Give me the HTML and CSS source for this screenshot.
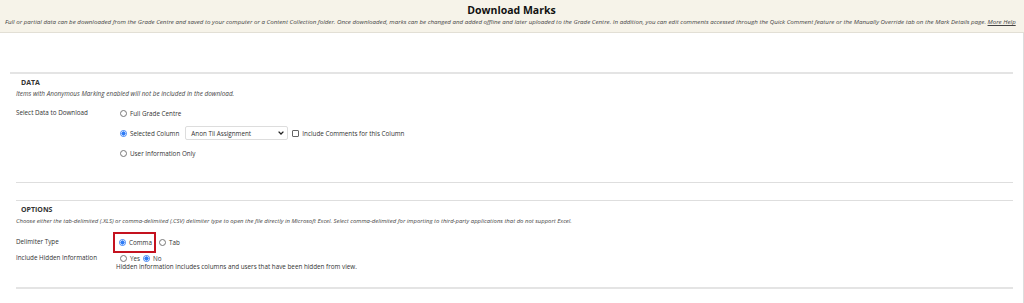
FILE: index.html
```html
<!DOCTYPE html>
<html lang="en">
<head>
  <meta charset="UTF-8">
  <meta name="viewport" content="width=device-width, initial-scale=1.0">
  <title>Download Marks</title>
  <link rel="stylesheet" href="styles.css">
</head>
<body>
  <div class="page-header">
    <h1>Download Marks</h1>
    <p class="page-help">Full or partial data can be downloaded from the Grade Centre and saved to your computer or a Content Collection folder. Once downloaded, marks can be changed and added offline and later uploaded to the Grade Centre. In addition, you can edit comments accessed through the Quick Comment feature or the Manually Override tab on the Mark Details page. <a href="#">More Help</a></p>
  </div>

  <div class="content">
    <div class="step step-first">
      <h3>DATA</h3>
      <p class="step-help">Items with Anonymous Marking enabled will not be included in the download.</p>

      <div class="field">
        <div class="field-label">Select Data to Download</div>
        <div class="field-body">
          <div class="opt-row">
            <span class="radio"></span><span>Full Grade Centre</span>
          </div>
          <div class="opt-row">
            <span class="radio checked"></span><span>Selected Column</span>
            <div class="select">
              <span>Anon Tii Assignment</span>
              <svg width="6" height="4" viewBox="0 0 6 4"><path d="M0.6 0.6 L3 3 L5.4 0.6" fill="none" stroke="#222" stroke-width="1.3"/></svg>
            </div>
            <span class="checkbox"></span><span>Include Comments for this Column</span>
          </div>
          <div class="opt-row">
            <span class="radio"></span><span>User Information Only</span>
          </div>
        </div>
      </div>
    </div>

    <div class="step-gap"></div>

    <div class="step step-second">
      <h3>OPTIONS</h3>
      <p class="step-help">Choose either the tab-delimited (.XLS) or comma-delimited (.CSV) delimiter type to open the file directly in Microsoft Excel. Select comma-delimited for importing to third-party applications that do not support Excel.</p>

      <div class="field field-tight field-delim">
        <div class="field-label">Delimiter Type</div>
        <div class="field-body">
          <div class="opt-row">
            <span class="highlight"><span class="radio checked"></span><span>Comma</span></span>
            <span class="radio"></span><span>Tab</span>
          </div>
        </div>
      </div>

      <div class="field field-tight">
        <div class="field-label">Include Hidden Information</div>
        <div class="field-body">
          <div class="opt-row">
            <span class="radio"></span><span>Yes</span>
            <span class="radio checked"></span><span>No</span>
          </div>
          <div class="field-note">Hidden information includes columns and users that have been hidden from view.</div>
        </div>
      </div>
    </div>

    <div class="step-end"></div>
  </div>
</body>
</html>
```

FILE: styles.css
```css
body {
  margin: 0;
  font-family: "Open Sans", Arial, sans-serif;
  font-size: 6.3px;
  color: #333;
  background: #fff;
}

.page-header {
  background-color: #f6f3e9;
  border-bottom: 1px solid #e2dfd5;
  height: 32px;
  padding: 0 6px 0 5px;
}

.page-header h1 {
  margin: 0;
  padding-top: 3px;
  text-align: center;
  font-size: 10.5px;
  font-weight: 700;
  color: #111;
  line-height: 14px;
}

.page-help {
  margin: 0;
  font-size: 6.18px;
  font-style: italic;
  line-height: 9px;
  color: #444;
  white-space: nowrap;
}

.page-help a {
  color: #444;
  text-decoration: underline;
}

.content {
  border-right: 1px solid #ddd;
  height: 270px;
  padding-top: 39px;
  box-sizing: border-box;
}

.step {
  margin: 0 10px 0 16px;
}

.step-first {
  margin-left: 10px;
  border-top: 2px solid #e4e4e4;
  padding-left: 6px;
}

.step-second {
  border-top: 1px solid #dedede;
}

.step h3 {
  margin: 0;
  padding: 3px 0 0 5px;
  font-size: 7px;
  font-weight: 700;
  line-height: 11px;
  color: #333;
}

.step-second h3 {
  line-height: 12px;
}

.step-help {
  margin: 0;
  font-style: italic;
  font-size: 6.4px;
  line-height: 11px;
  color: #444;
}

.step-second .step-help {
  font-size: 5.95px;
  line-height: 10px;
}

.field {
  display: flex;
  margin-top: 9px;
}

.field-tight {
  margin-top: 6px;
}

.field-delim {
  margin-top: 11px;
}

.field-label {
  width: 104px;
  line-height: 10px;
}

.field-body {
  display: flex;
  flex-direction: column;
  gap: 10px;
}

.field-tight .field-body {
  gap: 0;
}

.opt-row {
  display: flex;
  align-items: center;
  height: 10px;
  gap: 3px;
}

.radio {
  width: 5px;
  height: 5px;
  border: 1px solid #777;
  border-radius: 50%;
  background: #fff;
  flex: none;
}

.radio.checked {
  border-color: #3b82f6;
  background: radial-gradient(circle, #2f7cf6 0 55%, #fff 60%);
}

.select {
  width: 103px;
  height: 14px;
  border: 1px solid #ddd;
  border-radius: 2px;
  box-sizing: border-box;
  display: flex;
  align-items: center;
  justify-content: space-between;
  padding: 0 3px 0 5px;
  margin-left: 3px;
}

.checkbox {
  width: 5px;
  height: 5px;
  border: 1px solid #666;
  border-radius: 1px;
  flex: none;
  margin-left: 1px;
}

.highlight {
  display: flex;
  align-items: center;
  gap: 3px;
  border: 2px solid #c4121f;
  padding: 4px 2px 4px 4px;
  margin: -6px 0 -6px -7px;
}

.field-note {
  margin-left: -4px;
  line-height: 8px;
}

.step-gap {
  height: 17px;
  margin: 24px 10px 0 16px;
  border-top: 1px solid #dedede;
}

.step-end {
  margin: 16px 10px 0 16px;
  border-top: 2px solid #e4e4e4;
}
```
